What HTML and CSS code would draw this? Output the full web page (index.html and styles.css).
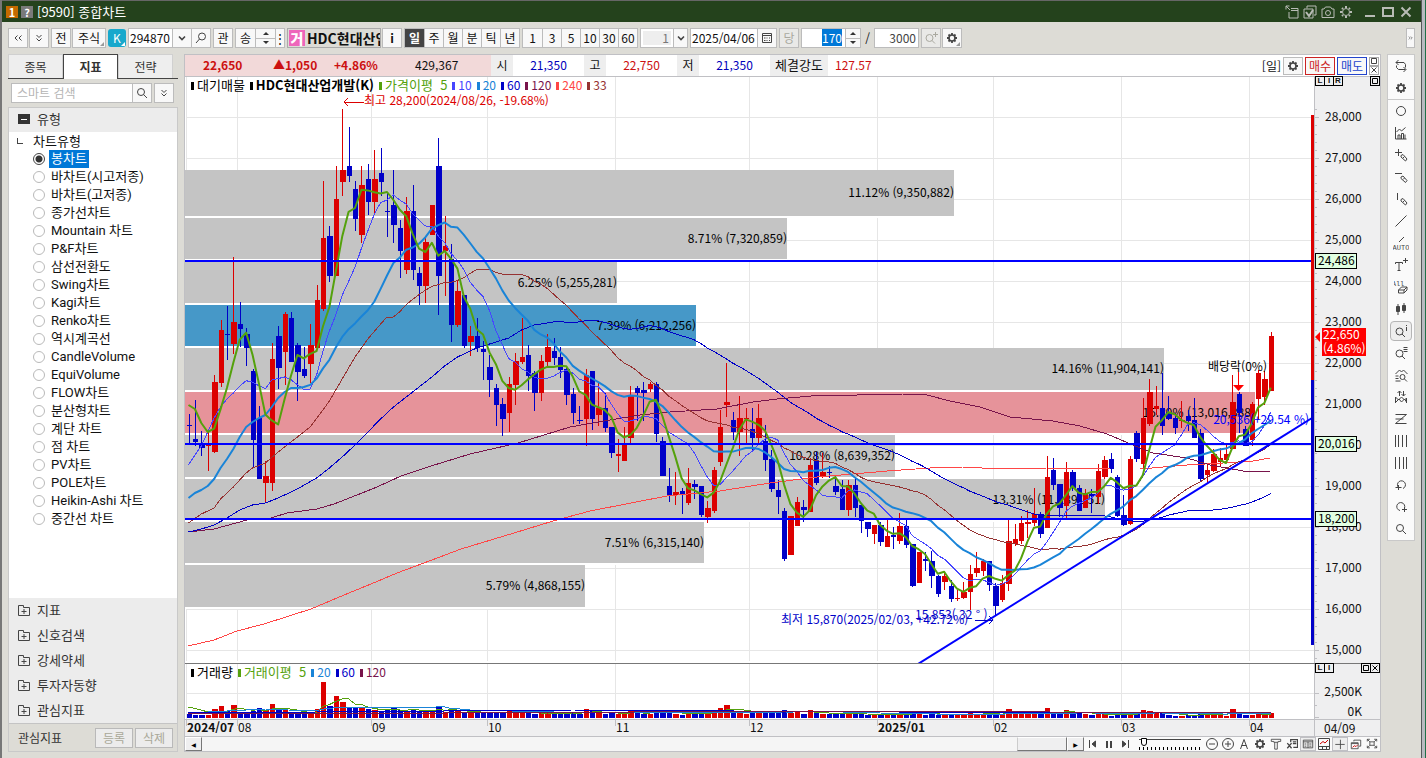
FILE: index.html
```html
<!DOCTYPE html>
<html lang="ko">
<head>
  <meta charset="UTF-8" />
  <meta name="viewport" content="width=device-width, initial-scale=1.0"/>
  <title>[9590] 종합차트</title>
  <link rel="stylesheet" href="styles.css">
</head>
<body>

  <!-- icon set -->
  <svg class="defs" aria-hidden="true">
    <symbol id="i-gear" viewBox="0 0 12 12"><circle cx="6" cy="6" r="3" stroke-width="1.6"/><path d="M6 1v2M6 9v2M1 6h2M9 6h2M2.500 2.500l1.300 1.300M8.200 8.200l1.300 1.300M2.500 9.500l1.300-1.300M8.200 3.800l1.300-1.300" stroke-width="1.800"/></symbol>
    <symbol id="i-search" viewBox="0 0 12 12"><circle cx="5" cy="5" r="3.500" /><path d="M7.500 7.500L11 11"/></symbol>
    <symbol id="i-glass" viewBox="0 0 12 12"><circle cx="7" cy="4.500" r="3.500"/><path d="M4.500 7L1 11"/></symbol>
    <symbol id="i-down" viewBox="0 0 12 12"><path d="M3 4.500l3 3 3-3" stroke-width="1.600"/></symbol>
    <symbol id="i-dleft" viewBox="0 0 12 12"><path d="M5.500 3.500L3 6l2.500 2.500M9.500 3.500L7 6l2.500 2.500"/></symbol>
    <symbol id="i-dright" viewBox="0 0 12 12"><path d="M3 3.500L5.500 6 3 8.500M6.500 3.500L9 6 6.500 8.500"/></symbol>
    <symbol id="i-ddown" viewBox="0 0 12 12"><path d="M3.500 3L6 5.500 8.500 3M3.500 6.500L6 9l2.500-2.500"/></symbol>
    <symbol id="i-plusbox" viewBox="0 0 12 12"><path d="M0.500 1.500v10h11v-8h-6v-2zM6 5v5M3.500 7.500h5"/></symbol>
    <symbol id="i-cal" viewBox="0 0 12 12"><path d="M1.500 1.500h9v9h-9zM1.500 3.500h9M3 6h1.500M5.500 6h1M8 6h1M3 8.500h1.500M5.500 8.500h1M8 8.500h1"/></symbol>
    <symbol id="i-export" viewBox="0 0 14 14"><path d="M1 1l4 4M1 4.500v-3.500h3.500M6 3.500h7v9.500h-9v-6M6 5.500h7"/></symbol>
    <symbol id="i-check" viewBox="0 0 14 14"><path d="M4 3.500v-2.500h9v9h-2M1 4h9v9h-9z"/><path d="M3 7l3 4 4-6" stroke-width="2"/></symbol>
    <symbol id="i-camera" viewBox="0 0 14 14"><path d="M1 4h2l1.500-2h5l1.500 2h2v8.500h-12z"/><circle cx="7" cy="8" r="2.500"/></symbol>
    <symbol id="i-sun" viewBox="0 0 14 14"><circle cx="7" cy="7" r="3.500"/><path d="M7 1v2M7 11v2M1 7h2M11 7h2M3 3l1 1M10 10l1 1M3 11l1-1M10 4l1-1" stroke-width="2"/></symbol>
    <symbol id="i-swap" viewBox="0 0 14 14"><path d="M4.500 1L2 3.500 4.500 6M2 3.500h8l1.500 2v3M9.500 8l2.500 2.500L9.500 13M11.500 10.500h-7L2.500 8.500v-2"/></symbol>
    <symbol id="i-circle" viewBox="0 0 14 14"><circle cx="7" cy="7" r="4.500"/></symbol>
    <symbol id="i-bars" viewBox="0 0 14 14"><path d="M1.500 1v12h11M4 13V9h2v4M7.500 13V7.500h2V13M11 13V8.500M2.500 6l3-3 2 2 4-3.500"/></symbol>
    <symbol id="i-pplus" viewBox="0 0 14 14"><path d="M1 4.500h7M4.500 1v7M7 7.500l2-1 4 4.500-1.500 2-4.500-4zM9 10l1.500-1.500"/></symbol>
    <symbol id="i-pminus" viewBox="0 0 14 14"><path d="M1 3.500h7M7 7l2-1 4 4.500-1.500 2-4.500-4zM9 9.500l1.500-1.500"/></symbol>
    <symbol id="i-pbar" viewBox="0 0 14 14"><path d="M3.500 1v7M7 7.500l2-1 4 4.500-1.500 2-4.500-4zM9 10l1.500-1.500"/></symbol>
    <symbol id="i-line" viewBox="0 0 14 14"><path d="M1.500 12.500l11-11"/></symbol>
    <symbol id="i-auto" viewBox="0 0 16 14"><path d="M6 6l5-5"/><text x="8" y="14" text-anchor="middle" class="mini">AUTO</text></symbol>
    <symbol id="i-text" viewBox="0 0 14 14"><path d="M1.500 6V4.500h7V6M5 4.500v8M3.500 12.500h3M9 2.500h5M11.500 0v5"/></symbol>
    <symbol id="i-erase" viewBox="0 0 14 14"><text x="4" y="6" text-anchor="middle" class="mini">All</text><path d="M4.500 10l3-3h5.500l-3 3zM4.500 10v3h5.500v-3M10 13l3-3V7"/></symbol>
    <symbol id="i-candle" viewBox="0 0 14 14"><path d="M4 2v11M10 1v10" /><path d="M2.500 4.500h3v5h-3zM8.500 3.500h3v5h-3z" fill="currentColor"/></symbol>
    <symbol id="i-qi" viewBox="0 0 14 14"><circle cx="5.500" cy="7.500" r="3.500"/><path d="M8 10l3 3M12.500 1v1M12.500 3v4"/></symbol>
    <symbol id="i-qp" viewBox="0 0 14 14"><circle cx="5.500" cy="7" r="3.500"/><path d="M8 9.500l3 3M9 3.500h5M11.500 1v5"/></symbol>
    <symbol id="i-qm" viewBox="0 0 14 14"><circle cx="5.500" cy="7.500" r="3.500"/><path d="M8 10l3 3M9.500 1.500h4M9.500 3.500h4M9.500 5.500h4"/></symbol>
    <symbol id="i-qw" viewBox="0 0 14 14"><circle cx="8.500" cy="9" r="2.500"/><path d="M10.500 11l2.500 2.500M1.500 6l4-4 2 2 2-2 4 4M1.500 8h3M1.500 10.500h3M1.500 13h5"/></symbol>
    <symbol id="i-wave" viewBox="0 0 14 14"><path d="M1.500 13V7l3 3 3-3 3 3 2-2v5M2 12l3-3 2.500 3 3-3 2 3M5.500 6V1M3.500 3l2-2 2 2M9.500 1v5M7.500 4l2 2 2-2"/></symbol>
    <symbol id="i-zig" viewBox="0 0 14 14"><path d="M1.500 2.500h11M1.500 7h8M12.500 2.500L1.500 11.500h11"/></symbol>
    <symbol id="i-v3" viewBox="0 0 14 14"><path d="M1.500 1v12M4.500 1v12M8.500 1v12M12.500 1v12"/></symbol>
    <symbol id="i-v4" viewBox="0 0 14 14"><path d="M1.500 1v12M5.500 1v12M9.500 1v12M12.500 1v12"/></symbol>
    <symbol id="i-undo" viewBox="0 0 14 14"><path d="M4.500 9.500A4 4 0 1 1 9 10.500M1.500 9.500h6M4.500 7v5"/></symbol>
    <symbol id="i-redo" viewBox="0 0 14 14"><path d="M6 10.500A4 4 0 1 1 10.500 8M10.500 7v5M8 9.500h5"/></symbol>
    <symbol id="i-minus" viewBox="0 0 14 14"><circle cx="7" cy="7" r="5.500"/><path d="M4 7h6"/></symbol>
    <symbol id="i-plus" viewBox="0 0 14 14"><circle cx="7" cy="7" r="5.500"/><path d="M4 7h6M7 4v6"/></symbol>
    <symbol id="i-a" viewBox="0 0 14 14"><path d="M3.500 12L7 2.500l3.500 9.500M4.500 8.500h5"/></symbol>
    <symbol id="i-tee" viewBox="0 0 14 14"><path d="M1.500 4V1.500h11V4h-3v1h-5V4zM5.500 5v8h3V5"/></symbol>
    <symbol id="i-excel" viewBox="0 0 14 14"><path d="M5.500 5V2h8v9h-5M8 4.500h4M8 6.500h4M1.500 6l5 6M6.500 6l-5 6" stroke-width="1.500"/></symbol>
    <symbol id="i-win" viewBox="0 0 14 14"><path d="M1.500 2.500h11v9h-11zM1.500 4.500h11M7 4.500v7M3 7h2M3 9.500h2M8.500 7h2.500M8.500 9.500h2.500"/></symbol>
    <symbol id="i-pane" viewBox="0 0 14 14"><path d="M1.500 1.500h11v11h-11zM1.500 9.500h11M5.500 9.500v3M9.500 9.500v3"/><path d="M3 7l3-2.500 2 1.500 3-3" stroke="#c00"/></symbol>
    <symbol id="i-cross" viewBox="0 0 14 14"><path d="M1.500 7.500h11M7.500 2v11"/></symbol>
    <symbol id="i-wins" viewBox="0 0 14 14"><path d="M4.500 4V2.500h8v7h-2M1.500 5.500h8v7h-8zM1.500 6.500h8"/><path d="M3 11l2-2 2 1 2-2" stroke="#c00"/></symbol>
    <symbol id="i-full" viewBox="0 0 14 14"><path d="M1.500 4V1.500h3M9.500 1.500h3v2.500M12.500 9v2.500h-3M4.500 11.500h-3V9M4.500 4.500h5v4h-5zM1.500 1.500l3 3M12.500 1.500l-3 3M1.500 11.500l3-3M12.500 11.500l-3-3"/></symbol>
    <symbol id="i-box" viewBox="0 0 8 8"><path d="M1.500 1.500h5v5h-5z"/></symbol>
    <symbol id="i-x" viewBox="0 0 8 8"><path d="M1.500 1.500l5 5M6.500 1.500l-5 5"/></symbol>
  </svg>

  <div class="window">
    <header class="titlebar">
      <span class="badge orange">1</span>
      <span class="badge grey">?</span>
      <h1>[9590] 종합차트</h1>
      <div class="win-buttons">
        <button aria-label="내보내기"><svg class="ico14"><use href="#i-export"/></svg></button>
        <button aria-label="선택"><svg class="ico14"><use href="#i-check"/></svg></button>
        <button aria-label="캡처"><svg class="ico14"><use href="#i-camera"/></svg></button>
        <button aria-label="설정"><svg class="ico14"><use href="#i-sun"/></svg></button>
        <button aria-label="최소화" class="min"></button>
        <button aria-label="최대화" class="max"></button>
        <button aria-label="닫기" class="close"><svg viewBox="0 0 12 12"><path d="M1.500 1.500l9 9M10.500 1.500l-9 9" stroke-width="2"/></svg></button>
      </div>
    </header>

    <div class="toolbar">
      <div class="group">
        <button class="tb" aria-label="이전"><svg class="ico12"><use href="#i-dleft"/></svg></button>
        <button class="tb" aria-label="펼침"><svg class="ico12"><use href="#i-ddown"/></svg></button>
      </div>
      <div class="group">
        <button class="tb">전</button>
        <button class="tb wide corner">주식</button>
      </div>
      <button class="kmark corner" aria-label="K">K</button>
      <div class="combo">
        <input class="code" type="text" value="294870" aria-label="종목코드">
        <button aria-label="목록"><svg class="ico12"><use href="#i-down"/></svg></button>
        <button aria-label="검색"><svg class="ico12"><use href="#i-glass"/></svg></button>
      </div>
      <button class="tb">관</button>
      <div class="combo">
        <button>송</button>
        <div class="spin"><button aria-label="위"></button><button aria-label="아래"></button></div>
        <button class="dots" aria-label="더보기">⋮</button>
      </div>
      <div class="group">
        <div class="stock"><b>거</b><span>HDC현대산업개발</span></div>
        <button class="tb bold">i</button>
      </div>
      <div class="combo periods">
        <button class="on">일</button><button>주</button><button>월</button><button>분</button><button>틱</button><button>년</button>
      </div>
      <div class="combo periods">
        <button>1</button><button>3</button><button>5</button><button>10</button><button>30</button><button>60</button>
      </div>
      <div class="combo">
        <input class="unit" type="text" value="1" disabled aria-label="단위">
        <button class="narrow" aria-label="목록"><svg class="ico12"><use href="#i-down"/></svg></button>
      </div>
      <div class="combo">
        <input class="date" type="text" value="2025/04/06" aria-label="날짜">
        <button aria-label="달력"><svg class="ico12"><use href="#i-cal"/></svg></button>
      </div>
      <button class="tb off">당</button>
      <div class="combo">
        <div class="count"><mark>170</mark></div>
        <div class="spin small"><button aria-label="위"></button><button aria-label="아래"></button></div>
      </div>
      <span class="slash">/</span>
      <div class="combo"><input class="total" type="text" value="3000" aria-label="전체 봉수"></div>
      <div class="group">
        <button class="tb off" aria-label="확대"><svg class="ico14"><use href="#i-qp"/></svg></button>
        <button class="tb corner" aria-label="설정"><svg class="ico12"><use href="#i-gear"/></svg></button>
      </div>
      <button class="tb more" aria-label="더보기"><svg class="ico12"><use href="#i-dright"/></svg></button>
    </div>

    <div class="body">
      <aside class="sidebar">
        <nav class="tabs">
          <button>종목</button><button class="on">지표</button><button>전략</button>
        </nav>
        <div class="search">
          <div class="combo">
            <input type="text" placeholder="스마트 검색" aria-label="스마트 검색">
            <button aria-label="검색"><svg class="ico12"><use href="#i-search"/></svg></button>
          </div>
          <button class="tb" aria-label="펼침"><svg class="ico12"><use href="#i-ddown"/></svg></button>
        </div>
        <div class="panel">
          <h2 class="head first"><i class="folder"></i>유형</h2>
          <fieldset class="types">
            <legend>차트유형</legend>
            <label><input type="radio" name="type" checked><span>봉차트</span></label>
            <label><input type="radio" name="type"><span>바차트(시고저종)</span></label>
            <label><input type="radio" name="type"><span>바차트(고저종)</span></label>
            <label><input type="radio" name="type"><span>종가선차트</span></label>
            <label><input type="radio" name="type"><span>Mountain 차트</span></label>
            <label><input type="radio" name="type"><span>P&amp;F차트</span></label>
            <label><input type="radio" name="type"><span>삼선전환도</span></label>
            <label><input type="radio" name="type"><span>Swing차트</span></label>
            <label><input type="radio" name="type"><span>Kagi차트</span></label>
            <label><input type="radio" name="type"><span>Renko차트</span></label>
            <label><input type="radio" name="type"><span>역시계곡선</span></label>
            <label><input type="radio" name="type"><span>CandleVolume</span></label>
            <label><input type="radio" name="type"><span>EquiVolume</span></label>
            <label><input type="radio" name="type"><span>FLOW차트</span></label>
            <label><input type="radio" name="type"><span>분산형차트</span></label>
            <label><input type="radio" name="type"><span>계단 차트</span></label>
            <label><input type="radio" name="type"><span>점 차트</span></label>
            <label><input type="radio" name="type"><span>PV차트</span></label>
            <label><input type="radio" name="type"><span>POLE차트</span></label>
            <label><input type="radio" name="type"><span>Heikin-Ashi 차트</span></label>
            <label><input type="radio" name="type"><span>중간선 차트</span></label>
          </fieldset>
          <div class="groups">
            <button class="head"><svg class="ico12"><use href="#i-plusbox"/></svg>지표</button>
            <button class="head"><svg class="ico12"><use href="#i-plusbox"/></svg>신호검색</button>
            <button class="head"><svg class="ico12"><use href="#i-plusbox"/></svg>강세약세</button>
            <button class="head"><svg class="ico12"><use href="#i-plusbox"/></svg>투자자동향</button>
            <button class="head"><svg class="ico12"><use href="#i-plusbox"/></svg>관심지표</button>
          </div>
          <div class="foot">
            <span>관심지표</span>
            <button disabled>등록</button>
            <button disabled>삭제</button>
          </div>
        </div>
      </aside>

      <main class="main">
        <div class="quote">
          <div class="now"><b>22,650</b><b>▲1,050</b><b>+4.86%</b><span>429,367</span></div>
          <span class="key">시</span><span class="val down">21,350</span>
          <span class="key">고</span><span class="val up">22,750</span>
          <span class="key">저</span><span class="val down">21,350</span>
          <span class="key long">체결강도</span><span class="val power up">127.57</span>
          <div class="orders">
            <span>[일]</span>
            <button class="tb" aria-label="설정"><svg class="ico12"><use href="#i-gear"/></svg></button>
            <button class="buy">매수</button>
            <button class="sell">매도</button>
            <div class="tiny"><button aria-label="확대"><svg class="ico8"><use href="#i-box"/></svg></button><button aria-label="닫기"><svg class="ico8"><use href="#i-x"/></svg></button></div>
          </div>
        </div>

        <div class="pane price">
          <div class="plot">
            <svg id="plot"></svg>
            <div class="legend">
              <span class="k name">대기매물</span><span class="k name"><b>HDC현대산업개발(K)</b></span><span class="m5 name">가격이평&nbsp; 5</span><span class="m10">10</span><span class="m20">20</span><span class="m60">60</span><span class="m120">120</span><span class="m240">240</span><span class="m33">33</span>
            </div>
          </div>
          <div class="axis">
            <svg id="axis"></svg>
            <div class="marks"><button>L</button><button>I</button><button>R</button></div>
            <div class="marks end"><button aria-label="확대"><svg class="ico8"><use href="#i-box"/></svg></button></div>
          </div>
        </div>

        <div class="pane volume">
          <div class="plot">
            <svg id="vplot"></svg>
            <div class="legend">
              <span class="k name">거래량</span><span class="m5 name">거래이평&nbsp; 5</span><span class="m20">20</span><span class="m60">60</span><span class="m120">120</span>
            </div>
          </div>
          <div class="axis">
            <svg id="vaxis"></svg>
            <div class="marks"><button>L</button><button>I</button></div>
            <div class="marks end"><button aria-label="확대"><svg class="ico8"><use href="#i-box"/></svg></button><button aria-label="닫기"><svg class="ico8"><use href="#i-x"/></svg></button></div>
          </div>
        </div>

        <div class="dates"><svg id="dates"></svg><span>04/09</span></div>

        <div class="controls">
          <button class="arrow" aria-label="왼쪽">◀</button>
          <div class="track"><div class="thumb"></div></div>
          <button class="arrow" aria-label="오른쪽">▶</button>
          <div class="play">
            <button aria-label="처음"><svg viewBox="0 0 10 10"><path d="M1.500 1v8M7.500 2v6L4 5z" fill="currentColor"/></svg></button>
            <button aria-label="정지"><svg viewBox="0 0 10 10"><path d="M3 2v7M7 2v7" stroke-width="2"/></svg></button>
            <button aria-label="끝"><svg viewBox="0 0 10 10"><path d="M8.500 1v8M2.500 2v6L6 5z" fill="currentColor"/></svg></button>
          </div>
          <input class="speed" type="range" min="0" max="100" value="4" aria-label="속도">
          <div class="tools">
            <button aria-label="축소"><svg class="ico14"><use href="#i-minus"/></svg></button>
            <button aria-label="확대"><svg class="ico14"><use href="#i-plus"/></svg></button>
            <button aria-label="글자"><svg class="ico14"><use href="#i-a"/></svg></button>
            <button aria-label="설정"><svg class="ico12"><use href="#i-gear"/></svg></button>
            <button aria-label="도구"><svg class="ico12"><use href="#i-tee"/></svg></button>
            <button aria-label="엑셀"><svg class="ico12"><use href="#i-excel"/></svg></button>
            <button aria-label="창" class="on"><svg class="ico12"><use href="#i-win"/></svg></button>
            <button aria-label="차트"><svg class="ico14"><use href="#i-pane"/></svg></button>
            <button aria-label="십자선" class="on"><svg class="ico12"><use href="#i-cross"/></svg></button>
            <button aria-label="창 복사"><svg class="ico12"><use href="#i-wins"/></svg></button>
            <button aria-label="전체화면"><svg class="ico12"><use href="#i-full"/></svg></button>
          </div>
        </div>
      </main>

      <nav class="draw">
        <button aria-label="전환"><svg class="ico14"><use href="#i-swap"/></svg></button>
        <button aria-label="설정"><svg class="ico12"><use href="#i-gear"/></svg></button>
        <hr>
        <button aria-label="원"><svg class="ico14"><use href="#i-circle"/></svg></button>
        <button aria-label="지표"><svg class="ico14"><use href="#i-bars"/></svg></button>
        <button aria-label="십자 그리기"><svg class="ico14"><use href="#i-pplus"/></svg></button>
        <button aria-label="수평선"><svg class="ico14"><use href="#i-pminus"/></svg></button>
        <button aria-label="수직선"><svg class="ico14"><use href="#i-pbar"/></svg></button>
        <button aria-label="추세선"><svg class="ico14"><use href="#i-line"/></svg></button>
        <button aria-label="자동"><svg class="ico16"><use href="#i-auto"/></svg></button>
        <button aria-label="글자"><svg class="ico14"><use href="#i-text"/></svg></button>
        <button aria-label="전체 지우기"><svg class="ico14"><use href="#i-erase"/></svg></button>
        <button aria-label="봉"><svg class="ico14"><use href="#i-candle"/></svg></button>
        <button aria-label="정보" class="on"><svg class="ico14"><use href="#i-qi"/></svg></button>
        <button aria-label="목록"><svg class="ico14"><use href="#i-qm"/></svg></button>
        <button aria-label="패턴"><svg class="ico14"><use href="#i-qw"/></svg></button>
        <button aria-label="파동"><svg class="ico14"><use href="#i-wave"/></svg></button>
        <button aria-label="되돌림"><svg class="ico14"><use href="#i-zig"/></svg></button>
        <button aria-label="피보나치"><svg class="ico14"><use href="#i-v3"/></svg></button>
        <button aria-label="시간대"><svg class="ico14"><use href="#i-v4"/></svg></button>
        <button aria-label="되돌리기"><svg class="ico14"><use href="#i-undo"/></svg></button>
        <button aria-label="다시"><svg class="ico14"><use href="#i-redo"/></svg></button>
        <button aria-label="돋보기"><svg class="ico12"><use href="#i-search"/></svg></button>
      </nav>
    </div>
  </div>

  <script src="chart.js"></script>
</body>
</html>
```
FILE: styles.css
```css
* {
  box-sizing: border-box;
}

body {
  margin: 0;
  min-height: 100vh;
  padding: 1px 5px 0 2px;
  background: linear-gradient(90deg, #777 0 2px, #666 2px calc(100% - 5px), #55575a calc(100% - 5px) calc(100% - 4px), #b8bac0 calc(100% - 4px) calc(100% - 1px), #1e7048 calc(100% - 1px));
  font: 12px/16px "Noto Sans CJK KR", sans-serif;
  color: #111;
  overflow: hidden;
}

button, input {
  font: inherit;
  color: inherit;
  margin: 0;
}

button {
  padding: 0;
  border: 0;
  background: none;
  display: inline-flex;
  align-items: center;
  justify-content: center;
  white-space: nowrap;
}

button svg {
  color: #444;
}

input {
  min-width: 0;
}

svg {
  fill: none;
  stroke: currentColor;
}

.defs {
  display: none;
}

.ico8 { width: 8px; height: 8px; }
.ico12 { width: 12px; height: 12px; }
.ico14 { width: 14px; height: 14px; }
.ico16 { width: 16px; height: 14px; }

.mini {
  font: 7px "Liberation Mono", monospace;
  fill: currentColor;
  stroke: none;
}

.window {
  background: #dddcd6;
  min-height: calc(100vh - 1px);
}

/* title */
.titlebar {
  height: 21px;
  background: #24421c;
  color: #fff;
  display: flex;
  align-items: center;
  gap: 3px;
  padding: 0 9px 0 4px;
}

.titlebar h1 {
  margin: 0 0 0 1px;
  font-size: 13px;
  font-weight: normal;
}

.badge {
  width: 12px;
  height: 12px;
  line-height: 12px;
  text-align: center;
  font-size: 11px;
  font-weight: bold;
}

.badge.orange { background: #c46a00; }
.badge.grey { background: #7a7a7a; }

.win-buttons {
  margin-left: auto;
  display: flex;
  align-items: center;
  gap: 4px;
  color: #b9bcb6;
}

.win-buttons svg {
  color: inherit;
}

.win-buttons .min {
  width: 10px;
  height: 10px;
  margin: 0 3px 0 8px;
  border-bottom: 2px solid;
}

.win-buttons .max {
  width: 12px;
  height: 10px;
  border: 2px solid;
}

.win-buttons .close {
  margin-left: 2px;
}

.win-buttons .close svg {
  width: 12px;
  height: 12px;
}

/* toolbar */
.toolbar {
  height: 32px;
  padding: 0 6px;
  display: flex;
  align-items: center;
  gap: 2px;
}

.group {
  display: flex;
  gap: 1px;
}

.tb {
  flex: none;
  width: 20px;
  height: 20px;
  background: #f8f8f8;
  border: 1px solid #bcbcbc;
  position: relative;
}

.tb.wide { width: 34px; }
.tb.bold { font-weight: bold; }
.tb.off, .tb.off svg { color: #aaa9a0; background: #e9e9e7; }

.corner {
  position: relative;
}

.corner::after {
  content: "";
  position: absolute;
  right: 1px;
  bottom: 1px;
  border: 2px solid transparent;
  border-right-color: #999;
  border-bottom-color: #999;
}

.toolbar .more {
  width: 9px;
  margin-left: auto;
}

.kmark {
  width: 18px;
  height: 18px;
  border-radius: 3px;
  background: #18a8cc;
  color: #fff;
}

.kmark::after {
  border-right-color: #fff;
  border-bottom-color: #fff;
}

.combo {
  display: flex;
  height: 20px;
  border: 1px solid #bcbcbc;
  background: #fff;
}

.combo input {
  border: 0;
  padding: 0 2px;
  outline: none;
  background: #fff;
}

.combo > button {
  flex: none;
  width: 19px;
  height: 18px;
  border: 0;
  border-left: 1px solid #bcbcbc;
  background: #f8f8f8;
}

.combo > button:first-child {
  border-left: 0;
}

.combo .code { width: 43px; padding: 0 1px; }
.combo .unit { width: 32px; text-align: right; color: #777; background: #eee; border: 2px solid #fff; }
.combo .narrow { width: 14px; }
.combo .date { width: 66px; padding: 0 1px; }
.combo .total { width: 43px; text-align: right; color: #444; }
.combo .dots { width: 9px; }

.periods .on {
  background: #444;
  color: #fff;
  font-weight: bold;
}

.spin {
  width: 20px;
  display: flex;
  flex-direction: column;
  border-left: 1px solid #bcbcbc;
  background: #f8f8f8;
}

.spin.small { width: 15px; }

.spin button {
  flex: 1;
}

.spin button::before {
  content: "";
  border: 3px solid transparent;
  border-top: 0;
  border-bottom-color: #333;
}

.spin button + button {
  border-top: 1px solid #bcbcbc;
}

.spin button + button::before {
  border: 3px solid transparent;
  border-bottom: 0;
  border-top-color: #333;
}

.count {
  width: 43px;
  padding: 1px 3px;
  text-align: right;
}

.count mark {
  background: #0078d7;
  color: #fff;
}

.slash {
  width: 9px;
  text-align: center;
}

.stock {
  width: 94px;
  height: 20px;
  border: 1px solid #aaa;
  display: flex;
  align-items: center;
  overflow: hidden;
  white-space: nowrap;
  font-size: 14px;
  font-weight: bold;
}

.stock b {
  flex: none;
  width: 16px;
  height: 16px;
  margin: 0 2px 0 1px;
  background: #ee66bb;
  color: #fff;
  text-align: center;
}

/* body */
.body {
  display: flex;
  align-items: flex-start;
  gap: 6px;
  padding: 0 6px;
}

.sidebar {
  flex: none;
  width: 170px;
}

.tabs {
  display: flex;
  height: 25px;
  padding-right: 5px;
  border-bottom: 1px solid #444;
}

.tabs button {
  flex: 1;
  background: #eee;
  border: 1px solid #d0d0d0;
  border-bottom: 0;
  color: #333;
}

.tabs .on {
  height: 25px;
  background: #fff;
  border-color: #444;
  font-weight: bold;
}

.search {
  display: flex;
  gap: 2px;
  padding: 4px 4px 4px 3px;
}

.search .combo {
  flex: 1;
  min-width: 0;
}

.search input {
  flex: 1;
  width: 60px;
  padding: 0 5px;
}

.search input::placeholder {
  color: #b5b5b5;
}

.panel {
  border: 1px solid #c9c9c9;
  background: #fff;
}

.head {
  margin: 0;
  width: 100%;
  height: 25px;
  padding: 0 9px 2px;
  display: flex;
  align-items: center;
  justify-content: flex-start;
  gap: 7px;
  background: #ececec;
  font-size: 13px;
  font-weight: normal;
  color: #333;
}

.head.first {
  height: 24px;
}

.folder {
  width: 12px;
  height: 10px;
  background: linear-gradient(#fff, #fff) center 5px / 6px 1px no-repeat #333;
}

.types {
  margin: 0;
  padding: 0 0 0 24px;
  border: 0;
  height: 466px;
  font-size: 13px;
  position: relative;
}

.types::before {
  content: "";
  position: absolute;
  left: 8px;
  top: 6px;
  width: 5px;
  height: 5px;
  border-left: 1px solid #444;
  border-bottom: 1px solid #444;
}

.types legend {
  float: left;
  width: 100%;
  height: 18px;
  line-height: 18px;
  padding: 0;
}

.types label {
  clear: both;
  display: flex;
  align-items: center;
  gap: 4px;
  height: 18px;
  font-family: Roboto, "Noto Sans CJK KR", sans-serif;
}

.types span {
  padding: 0 2px;
  line-height: 18px;
}

.types input {
  appearance: none;
  flex: none;
  width: 12px;
  height: 12px;
  border: 1px solid #b9b9b9;
  border-radius: 50%;
  background: #fff;
}

.types input:checked {
  border-color: #444;
  background: radial-gradient(#333 0 3px, #fff 4px);
}

.types input:checked + span {
  background: #0078d7;
  color: #fff;
}

.foot {
  height: 28px;
  padding: 0 4px 0 9px;
  display: flex;
  align-items: center;
  gap: 2px;
  background: #dddcd6;
  border-top: 1px solid #c4c4c4;
}

.foot span {
  flex: 1;
  color: #333;
}

.foot button {
  width: 38px;
  height: 20px;
  border: 1px solid #b9b9b9;
  background: #ececec;
  color: #a9a898;
}

/* quote row */
.main {
  flex: 1;
  min-width: 0;
  border: 1px solid #c0c0c4;
  background: #fff;
}

.quote {
  display: flex;
  height: 22px;
  line-height: 20px;
  border-bottom: 1px solid #c0c0c4;
}

.now {
  width: 306px;
  display: grid;
  grid-template-columns: 70px 61px 81px 1fr;
  padding-left: 18px;
  background: #f2d9d9;
}

.now b { font-size: 12px; }
.now b, .up { color: #cc1010; }
.down { color: #0000bb; }

.key {
  width: 22px;
  text-align: center;
  background: #eee;
}

.key.long { width: 58px; font-size: 13px; }

.val {
  width: 71px;
  text-align: center;
}

.val.power {
  text-align: left;
  padding-left: 7px;
}

.orders {
  margin-left: auto;
  padding-right: 1px;
  display: flex;
  align-items: center;
  gap: 2px;
}

.orders > .tb { height: 18px; }

.buy, .sell {
  width: 30px;
  height: 18px;
  border: 1px solid;
  background: #f8f8f8;
}

.buy { color: #cc2222; }
.sell { color: #2244cc; }

.tiny {
  width: 10px;
}

.tiny button {
  display: flex;
  width: 10px;
  height: 9px;
  border: 1px solid #aaa;
}

/* chart panes */
.pane {
  display: flex;
}

.plot {
  flex: 1;
  min-width: 0;
  position: relative;
}

.plot > svg, .axis > svg {
  display: block;
  width: 100%;
}

.price .plot > svg, .price .axis > svg { height: 586px; }
.volume .plot > svg, .volume .axis > svg { height: 55px; }

.volume {
  border-top: 1px solid #777;
}

.axis {
  flex: none;
  width: 66px;
  position: relative;
  border-left: 1px solid #c0c0c4;
  background: #efeff0;
}

.pane svg text, .dates text {
  font: 12px "Noto Sans CJK KR", sans-serif;
  stroke: none;
}

.legend {
  position: absolute;
  left: 6px;
  top: 0;
  display: flex;
  gap: 5px;
  white-space: nowrap;
}

.legend .name {
  font-size: 13px;
}

.legend span::before {
  content: "";
  display: inline-block;
  width: 3px;
  height: 8px;
  margin-right: 3px;
  background: currentColor;
}

.k { color: #000; }
.m5 { color: #54a10c; }
.m10 { color: #4646ff; }
.m20 { color: #1984d8; }
.m60 { color: #0000c8; }
.m120 { color: #78144b; }
.m240 { color: #ff4646; }
.m33 { color: #963232; }

.marks {
  position: absolute;
  left: 0;
  top: -1px;
  display: flex;
  background: #000;
  padding: 1px;
  gap: 1px;
}

.marks.end {
  left: auto;
  right: 0;
}

.marks button {
  width: 8px;
  height: 8px;
  background: #efeff0;
  font: bold 8px/8px "Liberation Sans", sans-serif;
}

.marks button svg {
  color: #000;
}

.dates {
  display: flex;
  height: 17px;
  line-height: 15px;
  border-top: 1px solid #c0c0c4;
  background: #efeff0;
}

.dates svg {
  flex: 1;
  min-width: 0;
  height: 16px;
  overflow: visible;
}

.dates span {
  width: 66px;
  padding-left: 9px;
  border-left: 1px solid #c0c0c4;
}

/* bottom controls */
.controls {
  display: flex;
  height: 15px;
  border-top: 1px solid #c0c0c4;
  background: #fafafa;
  color: #444;
}

.arrow {
  width: 17px;
  border: 1px solid;
  border-color: #fff #777 #777 #fff;
  background: #efeff0;
  color: #000;
  font: 6px "DejaVu Sans", sans-serif;
}

.track {
  flex: 1;
  display: flex;
  justify-content: flex-end;
  background: #f5f5f5;
}

.thumb {
  width: 50px;
  border: 1px solid;
  border-color: #fff #777 #777 #ccc;
  background: #efeff0;
}

.play {
  display: flex;
  gap: 6px;
  padding: 0 9px 0 4px;
}

.play svg {
  width: 10px;
  height: 10px;
}

.speed {
  appearance: none;
  width: 62px;
  height: 13px;
  background:
    linear-gradient(#444, #444) 0 2px / 100% 1px no-repeat,
    repeating-linear-gradient(90deg, #000 0 1px, transparent 1px 4px) 0 10px / 100% 3px no-repeat;
}

.speed::-webkit-slider-thumb {
  appearance: none;
  width: 6px;
  height: 8px;
  margin-top: -4px;
  background: #fff;
  border: 1px solid #000;
  border-radius: 0 0 3px 3px;
}

.tools {
  display: flex;
  padding-left: 3px;
}

.tools button {
  width: 16px;
}

.tools .on {
  border: 1px solid #c0c0c4;
  background: #eee;
}

/* drawing tools */
.draw {
  flex: none;
  width: 28px;
  border: 1px solid #c9c9c9;
  background: #fafafa;
  color: #444;
  display: flex;
  flex-direction: column;
  align-items: center;
}

.draw hr {
  width: 100%;
  margin: 0;
  border: 0;
  border-top: 1px solid #c9c9c9;
}

.draw button {
  width: 22px;
  height: 22px;
}

.draw .on {
  height: 20px;
  margin: 1px 0;
  border: 1px solid #b5b5b5;
  border-radius: 4px;
  background: #eee;
}
```
FILE: chart.js
```js
// rows: [up, high, top, bottom, low] on the price scale (1000 = 41px, 28,000 = 117)
const candles = [
  [0,414,425,426,445],[0,400,439,442,446],[0,431,443,448,456],[1,432,445,446,471],[1,375,382,452,453],
  [1,320,330,383,387],[0,306,334,335,360],[1,257,322,344,354],[0,302,324,329,347],[0,328,334,348,366],
  [0,369,371,440,467],[0,406,418,479,479],[1,461,476,483,503],[1,343,359,483,491],[0,326,336,368,389],
  [1,312,314,352,385],[0,312,318,362,362],[0,343,345,372,401],[0,347,369,376,378],[1,324,345,364,383],
  [1,285,300,348,348],[1,181,238,309,311],[0,226,236,276,282],[1,166,199,276,276],[1,109,170,182,196],
  [0,127,166,176,182],[0,181,189,219,231],[1,166,185,235,243],[0,164,179,202,215],[1,150,179,202,213],
  [0,148,173,182,196],[0,193,211,212,237],[0,170,205,225,243],[0,220,228,251,278],[1,197,211,270,274],
  [0,185,211,270,280],[0,267,273,286,305],[1,237,242,286,303],[1,205,205,235,235],[0,138,166,276,315],
  [1,216,246,251,296],[0,244,259,325,342],[1,280,291,325,327],[0,295,295,346,348],[1,326,336,342,356],
  [0,318,336,348,352],[0,341,349,352,380],[0,355,367,380,397],[0,384,388,405,426],[0,398,404,419,436],
  [1,377,384,413,432],[1,353,361,385,405],[1,318,357,362,364],[0,345,355,376,391],[0,371,373,393,411],
  [1,355,361,393,401],[1,334,347,362,368],[0,338,351,358,365],[0,347,357,370,378],[0,368,369,395,405],
  [0,388,394,413,424],[0,406,420,421,424],[1,369,375,419,446],[0,371,371,419,430],[1,383,408,415,426],
  [0,393,408,428,432],[0,427,427,453,458],[1,439,454,456,472],[1,427,444,461,461],[1,386,395,438,443],
  [0,386,388,393,421],[0,382,390,393,421],[1,382,384,389,392],[0,382,384,434,442],[0,437,441,476,476],
  [0,468,486,496,502],[1,472,492,495,505],[0,488,491,494,514],[1,468,483,503,505],[0,480,484,487,499],
  [0,486,486,515,517],[1,501,508,517,523],[1,467,470,511,513],[1,410,427,462,466],[1,363,402,405,417],
  [0,412,420,432,440],[1,396,418,432,456],[1,408,418,419,443],[0,408,429,438,451],[1,404,418,438,444],
  [0,425,441,460,471],[0,450,459,489,492],[0,480,490,497,514],[0,508,511,559,561],[1,516,516,555,555],
  [1,497,502,526,526],[0,500,507,510,522],[1,458,465,512,512],[0,452,461,483,485],[1,453,472,477,478],
  [0,466,472,473,478],[0,475,486,492,495],[0,480,489,510,510],[1,480,485,510,516],[0,477,485,508,517],
  [0,504,505,521,533],[0,522,522,529,537],[1,525,525,534,544],[0,522,525,542,546],[1,518,536,547,547],
  [0,527,535,537,549],[1,513,526,541,544],[0,520,526,545,548],[0,544,544,586,587],[1,552,552,583,583],
  [0,552,559,561,571],[0,551,561,576,588],[0,575,576,594,597],[1,571,576,582,590],[0,580,586,599,602],
  [1,590,598,599,601],[1,582,592,598,599],[1,565,574,592,610],[1,552,568,573,577],[1,559,561,571,576],
  [0,561,561,585,591],[0,583,586,606,616],[1,575,583,600,602],[1,519,541,584,591],[1,524,539,544,546],
  [1,516,523,541,544],[1,510,522,524,538],[1,488,514,523,526],[0,512,514,534,538],[1,456,477,528,528],
  [0,458,470,485,490],[0,484,484,508,517],[1,462,472,506,518],[0,470,472,488,491],[0,485,488,511,511],
  [1,489,493,508,508],[0,489,494,496,513],[1,464,471,497,504],[1,456,460,477,479],[0,453,459,469,473],
  [0,475,477,516,517],[0,495,515,525,526],[1,456,459,524,525],[0,431,433,459,462],[1,398,418,464,468],
  [1,379,392,424,426],[1,386,406,409,415],[0,373,408,426,435],[0,396,412,419,420],[0,413,418,428,434],
  [1,401,420,421,428],[0,410,416,421,431],[0,398,420,438,438],[0,429,433,479,482],[1,463,470,475,483],
  [1,449,454,471,472],[1,448,458,462,467],[1,444,454,460,463],[1,375,402,449,449],[0,392,394,413,433],
  [0,426,429,446,446],[1,402,404,440,446],[1,370,373,399,420],[1,371,379,397,405],[1,332,336,391,391]
];

// volume bar heights
const volumes = [
  4,3,3,3,9,12,7,13,6,6,7,10,8,14,8,9,5,4,6,4,9,36,12,22,16,10,10,10,9,8,6,8,10,8,
  7,9,6,8,7,12,6,8,7,6,5,6,5,5,6,5,7,6,5,5,4,5,6,4,5,4,6,4,9,7,5,4,5,4,4,8,
  5,4,4,7,6,5,4,3,5,4,4,5,8,10,13,7,5,4,5,5,6,7,6,8,5,7,4,8,5,4,4,4,4,5,4,
  4,3,3,4,3,3,4,4,6,5,3,4,3,3,4,3,3,6,4,4,4,4,3,9,5,5,4,5,4,10,4,5,8,5,
  5,4,3,4,4,2,4,4,4,4,8,7,6,5,3,2,2,3,2,6,4,4,3,2,9,4,3,3,4,3,5
];

// pts: full line in chart pixels, lead: values before the average has enough candles [index, y]
const averages = [
  { cls: 'm240', w: 1, pts: [[188,646],[214,640],[237,631],[264,624],[311,609],[344,595],[371,584],[397,573],[424,563],[461,549],[514,533],[553,521],[590,511],[667,496],[720,491],[770,483],[817,477],[853,474],[887,471],[930,468],[963,467],[1000,469],[1047,468],[1110,469],[1140,469],[1187,465],[1223,463],[1253,461],[1270,458]] },
  { cls: 'm120', w: 1, pts: [[188,532],[214,529],[247,520],[271,518],[287,513],[317,509],[334,504],[357,495],[377,487],[401,476],[431,466],[470,454],[518,443],[570,427],[610,420],[640,415],[670,412],[717,409],[753,402],[777,399],[823,395],[857,395],[903,394],[927,395],[950,401],[980,407],[1010,417],[1053,421],[1080,426],[1107,434],[1140,448],[1153,453],[1187,458],[1210,465],[1227,468],[1243,471],[1270,471]] },
  { cls: 'm33', w: 1, n: 33, lead: [[0,523],[2,514],[4,508],[5,499],[7,487],[9,473],[10,468],[12,463],[14,452],[16,442],[19,427],[21,410],[22,401],[24,379],[26,357],[28,339],[30,324],[31,317]] },
  { cls: 'm60', w: 1, n: 60, lead: [[0,532],[2,529],[4,525],[6,518],[8,510],[10,505],[12,503],[14,498],[17,489],[20,478],[22,468],[24,457],[26,445],[28,432],[30,419],[32,407],[35,392],[38,377],[40,366],[42,357],[45,348],[48,342],[50,338],[52,330],[54,325],[56,323],[58,321]] },
  { cls: 'm10', w: 1, n: 10, lead: [[0,465],[1,455],[2,446],[3,432],[4,418],[5,407],[6,399],[7,393],[8,386]] },
  { cls: 'm20', w: 2, n: 20, lead: [[0,498],[1,493],[2,490],[3,486],[4,479],[5,468],[6,459],[7,449],[8,437],[9,427],[10,422],[11,418],[12,415],[13,407],[14,398],[15,392],[16,388],[17,388],[18,387]] },
  { cls: 'm5', w: 2, n: 5, lead: [[0,405],[1,409],[2,423],[3,432]] }
];

// volume profile: [top, bottom, right, label, colour]
const profile = [
  [170,216,954,'11.12% (9,350,882)','#c4c4c4'],
  [218,259,787,'8.71% (7,320,859)','#c4c4c4'],
  [262,303,617,'6.25% (5,255,281)','#c4c4c4'],
  [305,346,696,'7.39% (6,212,256)','#4698c8'],
  [348,390,1164,'14.16% (11,904,141)','#c4c4c4'],
  [392,433,1255,'15.39% (13,016,388)','#e6939a'],
  [435,477,895,'10.28% (8,639,352)','#c4c4c4'],
  [479,520,1105,'13.31% (11,189,151)','#c4c4c4'],
  [522,563,704,'7.51% (6,315,140)','#c4c4c4'],
  [565,607,585,'5.79% (4,868,155)','#c4c4c4']
];

const months = [
  [186,'2024/07',true],[237,'08'],[371,'09'],[487,'10'],[615,'11'],[749,'12'],
  [877,'2025/01',true],[993,'02'],[1121,'03'],[1249,'04']
];

const LEFT = 185, WIDTH = 1129, TOP = 77;
const RED = '#dc0000', BLUE = '#0000c8';
let k = 1;

const X = px => (px - LEFT) * k;
const XI = i => X(188.5 + i * 6.404);
const Y = y => y - TOP;

function add(svg, name, attrs, text) {
  const el = document.createElementNS('http://www.w3.org/2000/svg', name);
  for (const a in attrs) el.setAttribute(a, attrs[a]);
  if (text !== undefined) el.textContent = text;
  svg.appendChild(el);
  return el;
}

function rect(svg, x, y, w, h, fill, stroke) {
  return add(svg, 'rect', { x, y, width: w, height: h, fill, stroke: stroke || 'none', 'shape-rendering': 'crispEdges' });
}

function line(svg, pts, w, attrs) {
  return add(svg, 'polyline', Object.assign({
    points: pts.map(p => p.join(',')).join(' '),
    fill: 'none',
    stroke: 'currentColor',
    'stroke-width': w,
    'stroke-linejoin': 'round',
    'shape-rendering': w > 1 ? 'auto' : 'crispEdges'
  }, attrs));
}

function label(svg, x, y, text, fill, anchor) {
  return add(svg, 'text', { x, y: y + 4, fill, 'text-anchor': anchor || 'start' }, text);
}

function sma(values, n) {
  const out = [];
  for (let i = n - 1; i < values.length; i++) {
    let sum = 0;
    for (let j = i - n + 1; j <= i; j++) sum += values[j];
    out.push([i, sum / n]);
  }
  return out;
}

// candle body: left edge and width, one pixel of air between neighbours
function slot(i) {
  const x = Math.round(XI(i)) - 2;
  return [x, Math.max(1, Math.round(XI(i + 1)) - 2 - x - 1)];
}

function drawPrice() {
  const svg = document.getElementById('plot');
  svg.innerHTML = '';
  k = svg.clientWidth / WIDTH;
  for (let p = 0; p < 14; p++) rect(svg, X(186), Y(117 + p * 41), X(1314) - X(186), 1, '#e6e6e6');
  months.forEach(m => rect(svg, X(m[0]), 0, 1, 584, '#e6e6e6'));

  profile.forEach(b => {
    rect(svg, 0, Y(b[0]), X(b[2]), b[1] - b[0], b[4]);
    rect(svg, 0, Y(b[1]), X(b[2]), 2, '#fff');
  });
  profile.forEach(b => label(svg, X(b[2]), Y((b[0] + b[1]) / 2), b[3], '#000', 'end'));

  candles.forEach((c, i) => {
    const color = c[0] ? RED : BLUE;
    const [x, w] = slot(i);
    rect(svg, x + 2, Y(c[1]), 1, c[4] - c[1], color);
    rect(svg, x, Y(c[2]), w, Math.max(1, c[3] - c[2]), color);
  });

  const close = candles.map(c => c[0] ? c[2] : c[3]);
  averages.forEach(a => {
    const pts = a.pts
      ? a.pts.map(p => [X(p[0]), Y(p[1])])
      : a.lead.concat(sma(close, a.n)).map(p => [XI(p[0]), Y(p[1])]);
    line(svg, pts, a.w, { class: a.cls });
  });

  [261, 444, 519].forEach(y => rect(svg, 0, Y(y) - 1, X(1312), 2, '#0000ff'));
  line(svg, [[X(918), Y(664)], [X(1312), Y(418)]], 2, { stroke: '#0000ff' });
  rect(svg, X(1314) - 3, Y(115), 3, 265, RED);
  rect(svg, X(1314) - 3, Y(380), 3, 265, BLUE);

  label(svg, X(364), Y(101), '최고 28,200(2024/08/26, -19.68%)', RED);
  line(svg, [[X(364), Y(102)], [X(344), Y(102)]], 1, { stroke: RED });
  line(svg, [[X(348), Y(98)], [X(344), Y(102)], [X(348), Y(106)]], 1, { stroke: RED });
  label(svg, X(781), Y(620), '최저 15,870(2025/02/03, +42.72%)', BLUE);
  label(svg, X(915), Y(615), '15,853( 32 ° )', BLUE);
  line(svg, [[X(975), Y(620)], [X(993), Y(620)]], 1, { stroke: BLUE });
  line(svg, [[X(989), Y(616)], [X(993), Y(620)], [X(989), Y(624)]], 1, { stroke: BLUE });
  label(svg, X(1208), Y(367), '배당락(0%)', '#000');
  label(svg, X(1309), Y(420), '20,536(+29.54 %)', '#0000ff', 'end');
  rect(svg, X(1238), Y(372), 1, 14, '#f00');
  add(svg, 'path', { d: `M${X(1233)} ${Y(385)}h11l-5.500 6z`, fill: '#f00', stroke: 'none' });
}

function tag(svg, y, text) {
  rect(svg, 0.5, Y(y) - 7.5, 41, 15, '#e1ffe1', '#000');
  label(svg, 3, Y(y), text, '#000');
}

function drawAxis() {
  const svg = document.getElementById('axis');
  svg.innerHTML = '';
  for (let y = 109; y < 662; y += 8.2) rect(svg, 0, Y(Math.round(y)), 2, 1, '#c0c0c4');
  for (let p = 28; p > 14; p--) {
    const y = 117 + (28 - p) * 41;
    rect(svg, 0, Y(y), 4, 1, '#c0c0c4');
    label(svg, 10, Y(y), p + ',000', '#111');
  }
  tag(svg, 261, '24,486');
  tag(svg, 444, '20,016');
  tag(svg, 519, '18,200');
  add(svg, 'path', { d: `M0 ${Y(337)}l5-5v10z`, fill: '#f00', stroke: 'none' });
  rect(svg, 7, Y(328), 44, 28, '#f00');
  label(svg, 8, Y(335), '22,650', '#fff');
  label(svg, 8, Y(349), '(4.86%)', '#fff');
}

function drawVolume() {
  const svg = document.getElementById('vplot');
  svg.innerHTML = '';
  rect(svg, X(186), 29, X(1314) - X(186), 1, '#e6e6e6');
  months.forEach(m => rect(svg, X(m[0]), 0, 1, 55, '#e6e6e6'));
  volumes.forEach((v, i) => {
    const [x, w] = slot(i);
    rect(svg, x, 54 - v, w, v, candles[i][0] ? RED : BLUE);
  });
  const fast = sma(volumes, 5).map(p => [XI(p[0]), 54 - p[1]]);
  line(svg, [[XI(0), 43], [XI(2), 46], [XI(3), 48]].concat(fast), 1, { class: 'm5' });
  const slow = sma(volumes, 20).map(p => [XI(p[0]), 54 - p[1]]);
  line(svg, [[XI(0), 49], [XI(6), 47], [XI(12), 45]].concat(slow), 1, { class: 'm20' });
  line(svg, [[XI(0), 49], [XI(20), 48], [XI(60), 46], [XI(110), 48], [XI(169), 49]], 1, { class: 'm60' });
  line(svg, [[XI(0), 50], [XI(40), 49], [XI(100), 47], [XI(169), 49]], 1, { class: 'm120' });

  const axis = document.getElementById('vaxis');
  axis.innerHTML = '';
  [[29, 4], [41, 2], [53, 4]].forEach(t => rect(axis, 0, t[0], t[1], 1, '#c0c0c4'));
  label(axis, 47, 28, '2,500K', '#111', 'end');
  label(axis, 47, 48, '0K', '#111', 'end');

  const dates = document.getElementById('dates');
  dates.innerHTML = '';
  months.forEach(m => {
    rect(dates, X(m[0]), 0, 1, 6, '#c0c0c4');
    const t = label(dates, X(m[0]) + 1, 8, m[1], '#111');
    if (m[2]) t.style.fontWeight = 'bold';
  });
}

function draw() {
  drawPrice();
  drawAxis();
  drawVolume();
}

window.addEventListener('resize', draw);
draw();
```
